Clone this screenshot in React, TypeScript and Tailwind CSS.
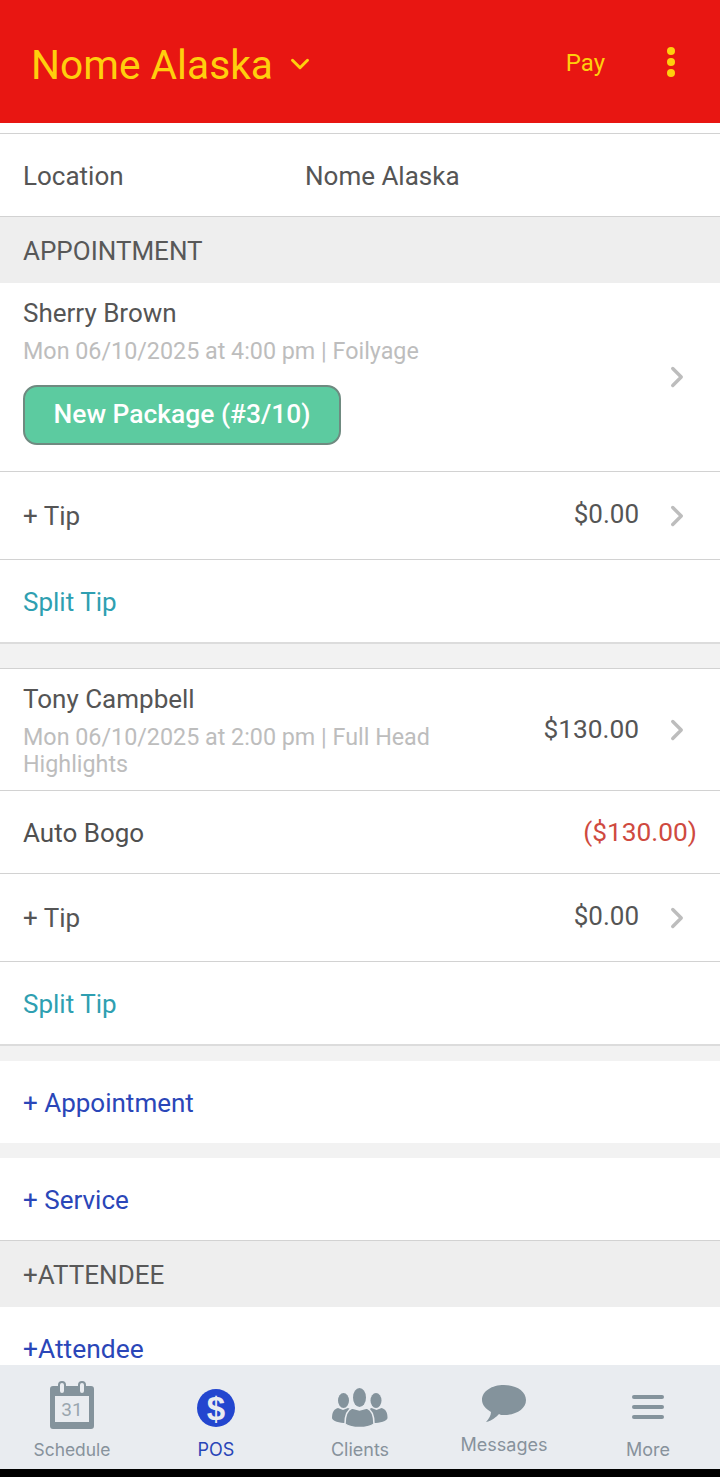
import { ChevronDown, ChevronRight } from 'lucide-react'

function Chevron() {
  return <ChevronRight className="w-[34px] h-[34px] text-[#bdbdbd] ml-[21px] mr-[-3px] shrink-0" strokeWidth={2.4} />
}

function TipRow({ height }: { height: string }) {
  return (
    <div className={`flex items-center justify-between border-b border-[#d2d2d2] pl-[23px] pr-[29px] ${height}`}>
      <span className="mt-[2px] text-[26px] text-[#555555]">+ Tip</span>
      <div className="flex items-center">
        <span className="mb-[2px] text-[26px] text-[#555555]">$0.00</span>
        <Chevron />
      </div>
    </div>
  )
}

function SplitTip() {
  return (
    <div className="flex items-center h-[84px] pt-[3px] pl-[23px] border-b-2 border-[#dcdcdc] text-[26px] text-[#2f9fb1]">
      Split Tip
    </div>
  )
}

function SectionHeader({ label }: { label: string }) {
  return (
    <div className="flex items-center h-[66px] pt-[2px] bg-[#eeeeee] pl-[23px] text-[26px] text-[#585858]">{label}</div>
  )
}

function AddRow({ label, border }: { label: string; border?: boolean }) {
  return (
    <div className={`flex items-center pl-[23px] text-[26px] text-[#2a46b8] ${border ? 'h-[83px] pt-[3px] border-b border-[#d2d2d2]' : 'h-[82px] pt-[2px]'}`}>
      {label}
    </div>
  )
}

function CalendarIcon() {
  return (
    <svg width="44" height="48" viewBox="0 0 44 48" className="block">
      <path fill="#84939c" d="M3 5h5V4a4 4 0 0 1 8 0v1h12V4a4 4 0 0 1 8 0v1h5a3 3 0 0 1 3 3v37a3 3 0 0 1-3 3H3a3 3 0 0 1-3-3V8a3 3 0 0 1 3-3z" />
      <path fill="#e9ecf0" d="M5 15h34v26H5z" />
      <path fill="#e9ecf0" d="M10 4a2 2 0 0 1 4 0v6a2 2 0 0 1-4 0zM30 4a2 2 0 0 1 4 0v6a2 2 0 0 1-4 0z" />
      <text x="22" y="35" textAnchor="middle" fontSize="19" fontFamily="Roboto, sans-serif" fill="#9aa6ae">31</text>
    </svg>
  )
}

function PosIcon() {
  return (
    <div className="w-[38px] h-[38px] rounded-full bg-[#2346cf] flex items-center justify-center text-[33px] leading-none font-bold text-[#e9ecf0] font-['Liberation_Sans',sans-serif]">
      $
    </div>
  )
}

function ClientsIcon() {
  return (
    <svg width="56" height="40" viewBox="0 0 56 40" className="block">
      <g fill="#84939c">
        <ellipse cx="11.500" cy="12.500" rx="5.500" ry="7.500" />
        <path d="M0 30c0-6 2-9 6-10l5 2 5-2 4 2-6 13c-6 0-14-2-14-5z" />
        <ellipse cx="44" cy="12.500" rx="5.500" ry="7.500" />
        <path d="M55.500 30c0-6-2-9-6-10l-5 2-5-2-4 2 6 13c6 0 14-2 14-5z" />
        <ellipse cx="27.500" cy="9.500" rx="6.500" ry="9.500" />
        <path stroke="#e9ecf0" strokeWidth="1.500" d="M13 36c0-9 2-14 7-16l7.500 2 7.500-2c5 2 7 7 7 16-3 2-9 3.500-14.500 3.500S16 38 13 36z" />
      </g>
    </svg>
  )
}

function MessagesIcon() {
  return (
    <svg width="44" height="38" viewBox="0 0 44 38" className="block">
      <path fill="#84939c" d="M22 0c12 0 22 6 22 15s-10 15-22 15c-2 0-4 0-5-1-3 3-7 7-13 8 3-3 5-7 5-10C4 24 0 20 0 15 0 6 10 0 22 0z" />
    </svg>
  )
}

function MoreIcon() {
  return (
    <svg width="32" height="24" viewBox="0 0 32 24" className="block">
      <g fill="#84939c">
        <rect x="0" y="0" width="32" height="4" rx="2" />
        <rect x="0" y="10" width="32" height="4" rx="2" />
        <rect x="0" y="20" width="32" height="4" rx="2" />
      </g>
    </svg>
  )
}

const tabs = [
  { label: 'Schedule', icon: <CalendarIcon />, text: 'text-[#87929c] text-[17.4px]', iconShift: 'mb-[3px]', labelShift: '' },
  { label: 'POS', icon: <PosIcon />, text: 'text-[#2a46b8] text-[18px]', iconShift: 'mt-[3px]', labelShift: '' },
  { label: 'Clients', icon: <ClientsIcon />, text: 'text-[#87929c] text-[18px]', iconShift: 'mt-[3px]', labelShift: '' },
  { label: 'Messages', icon: <MessagesIcon />, text: 'text-[#87929c] text-[18px]', iconShift: '', labelShift: 'mb-[5px]' },
  { label: 'More', icon: <MoreIcon />, text: 'text-[#87929c] text-[18px]', iconShift: '', labelShift: '' },
]

export default function App() {
  return (
    <div className="w-[720px] h-[1477px] flex flex-col bg-white overflow-hidden font-['Roboto',sans-serif]">
      {/* Top bar */}
      <header className="h-[123px] shrink-0 bg-[#e81612] flex items-center pl-[31px] pr-[45px] text-[#ffcf0d]">
        <span className="mt-[8px] text-[40.7px] leading-none">Nome Alaska</span>
        <ChevronDown className="mt-[4px] w-[30px] h-[30px] ml-[12px]" strokeWidth={2.4} />
        <span className="mt-[2px] ml-auto text-[24px]">Pay</span>
        <div className="ml-[62px] flex flex-col gap-[3px]">
          <span className="w-[8px] h-[8px] rounded-full bg-[#ffcf0d]" />
          <span className="w-[8px] h-[8px] rounded-full bg-[#ffcf0d]" />
          <span className="w-[8px] h-[8px] rounded-full bg-[#ffcf0d]" />
        </div>
      </header>

      <main className="flex-1 min-h-0 overflow-hidden pt-[10px]">
        <div className="flex items-center h-[84px] pt-[2px] border-y border-[#d2d2d2] pl-[23px] text-[26px] text-[#555555]">
          <span className="w-[282px]">Location</span>
          <span>Nome Alaska</span>
        </div>
        <SectionHeader label="APPOINTMENT" />

        {/* Sherry */}
        <div className="flex items-center justify-between h-[189px] border-b border-[#d2d2d2] pl-[23px] pr-[29px]">
          <div className="pb-[12px]">
            <div className="text-[26px] leading-[30px] text-[#555555]">Sherry Brown</div>
            <div className="mt-[10px] text-[23.3px] leading-[27px] text-[#bdbdbd]">Mon 06/10/2025 at 4:00 pm | Foilyage</div>
            <div className="mt-[20px] w-[318px] h-[60px] rounded-[14px] bg-[#5ccba0] border-2 border-[#6f8a80] flex items-center justify-center text-[26.4px] font-medium text-white">
              New Package (#3/10)
            </div>
          </div>
          <Chevron />
        </div>
        <TipRow height="h-[88px]" />
        <SplitTip />
        <div className="h-[25px] bg-[#f2f2f2] border-b border-[#d2d2d2]" />

        {/* Tony */}
        <div className="flex items-center justify-between h-[122px] border-b border-[#d2d2d2] pl-[23px] pr-[29px]">
          <div className="w-[440px] pt-[2px]">
            <div className="text-[26px] leading-[30px] text-[#555555]">Tony Campbell</div>
            <div className="mt-[10px] text-[23.3px] leading-[27px] text-[#bdbdbd]">Mon 06/10/2025 at 2:00 pm | Full Head Highlights</div>
          </div>
          <div className="flex items-center">
            <span className="mt-[1px] text-[26.3px] text-[#555555]">$130.00</span>
            <Chevron />
          </div>
        </div>
        <div className="flex items-center justify-between h-[83px] pt-[2px] border-b border-[#d2d2d2] pl-[23px] pr-[23px]">
          <span className="text-[26px] text-[#505050]">Auto Bogo</span>
          <span className="text-[26.3px] text-[#cf4a3f]">($130.00)</span>
        </div>
        <TipRow height="h-[88px]" />
        <SplitTip />
        <div className="h-[15px] bg-[#f2f2f2]" />
        <AddRow label="+ Appointment" />
        <div className="h-[15px] bg-[#f2f2f2]" />
        <AddRow label="+ Service" border />
        <SectionHeader label="+ATTENDEE" />
        <div className="flex items-center h-[84px] pt-[2px] pl-[23px] text-[26.4px] text-[#2a46b8]">+Attendee</div>
      </main>

      {/* Bottom tabs */}
      <nav className="h-[104px] shrink-0 bg-[#e9ecf0] flex">
        {tabs.map((tab) => (
          <div key={tab.label} className="w-[144px] flex flex-col items-center justify-end pb-[8px]">
            <div className={`flex-1 flex items-center justify-center pt-[9px] ${tab.iconShift}`}>{tab.icon}</div>
            <span className={`leading-[22px] font-['Inter',sans-serif] ${tab.text} ${tab.labelShift}`}>{tab.label}</span>
          </div>
        ))}
      </nav>
      <div className="h-[8px] shrink-0 bg-black" />
    </div>
  )
}
